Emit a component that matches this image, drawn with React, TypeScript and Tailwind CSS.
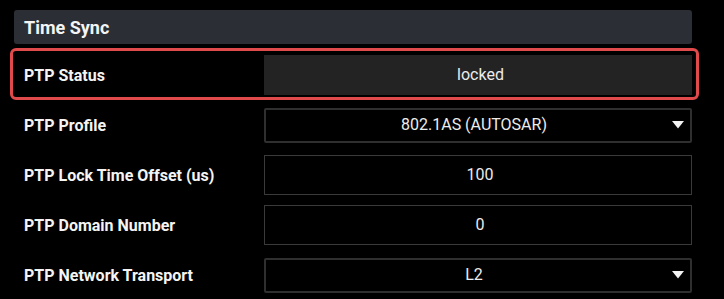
import React from "react";

const font = { fontFamily: "Roboto, 'Liberation Sans', sans-serif" };

function Caret() {
  return (
    <svg width="12" height="8" viewBox="0 0 12 8" className="absolute right-[8px] top-1/2 -translate-y-1/2">
      <path d="M0 0 L12 0 L6 7.5 Z" fill="#f2f2f2" />
    </svg>
  );
}

function Row({ label, children, highlight }: { label: string; children: React.ReactNode; highlight?: boolean }) {
  return (
    <div className="relative flex h-[50px] items-center">
      {highlight && (
        <div className="pointer-events-none absolute left-[-4px] right-[-7px] top-[-2px] bottom-[0px] rounded-[6px] border-[3px] border-[#e04a4b]" />
      )}
      <div className="w-[250px] pl-[10px] pt-[1px] text-[16px] font-bold text-[#f4f4f4]">{label}</div>
      <div className="relative flex-1">{children}</div>
    </div>
  );
}

export default function App() {
  return (
    <div className="h-[299px] w-[724px] overflow-hidden bg-black pl-[14px] pr-[32px] pt-[10px]" style={font}>
      <div className="flex h-[34px] items-center rounded-[3px] bg-[#2b2e35] pl-[10px] text-[18px] font-bold text-[#f4f4f4]">
        Time Sync
      </div>
      <div className="mt-[6px] flex flex-col">
        <Row label="PTP Status" highlight>
          <div className="flex h-[40px] items-center justify-center bg-[#232323] pl-[5px] text-[16px] text-[#ececec]">locked</div>
        </Row>
        <Row label="PTP Profile">
          <div className="flex h-[35px] items-center justify-center rounded-[2px] border-2 border-[#2f2f2f] pr-[8px] text-[16px] text-[#ececec]">
            802.1AS (AUTOSAR)
          </div>
          <Caret />
        </Row>
        <Row label="PTP Lock Time Offset (us)">
          <div className="flex h-[40px] items-center justify-center border border-[#3a3a3a] pl-[4px] text-[16px] text-[#ececec]">100</div>
        </Row>
        <Row label="PTP Domain Number">
          <div className="flex h-[40px] items-center justify-center border border-[#3a3a3a] pl-[4px] text-[16px] text-[#ececec]">0</div>
        </Row>
        <Row label="PTP Network Transport">
          <div className="flex h-[35px] items-center justify-center rounded-[2px] border-2 border-[#2f2f2f] pr-[8px] text-[16px] text-[#ececec]">
            L2
          </div>
          <Caret />
        </Row>
      </div>
    </div>
  );
}
